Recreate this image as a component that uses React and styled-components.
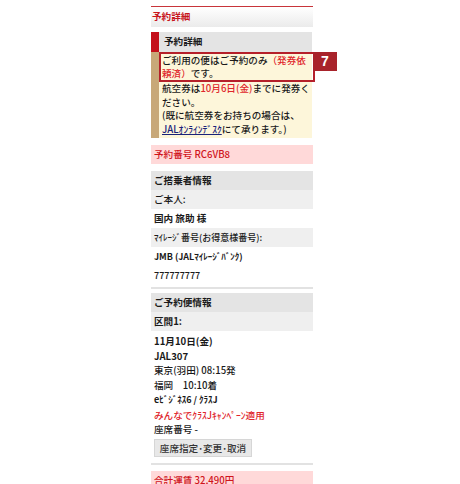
import React from "react";
import styled, { createGlobalStyle } from "styled-components";

const Global = createGlobalStyle`
  html, body { margin: 0; padding: 0; background: #fff; }
  body { font-family: "Noto Sans CJK JP", "Noto Sans", sans-serif; color: #1a1a1a; }
`;

const Page = styled.div`
  width: 460px;
  height: 484px;
  overflow: hidden;
  padding-left: 151px;
  padding-top: 6px;
  box-sizing: border-box;
`;

const Column = styled.div`
  width: 162px;
  display: flex;
  flex-direction: column;
  font-size: 9.6px;
  line-height: 13.5px;
`;

const PageTitle = styled.div`
  border-top: 1px solid #c8343a;
  height: 20px;
  display: flex;
  align-items: center;
  padding-left: 1px;
  color: #c8161d;
  font-weight: bold;
  background: linear-gradient(#ffffff, #ebebeb);
`;

const Box = styled.div`
  margin-top: 5px;
  display: grid;
  grid-template-columns: 8px 1fr;
  margin-right: 1px;
`;

const Bar = styled.div`
  background: ${(p) => p.$c};
`;

const BoxHead = styled.div`
  background: #e4e4e4;
  height: 20px;
  display: flex;
  align-items: center;
  padding-left: 5px;
  font-weight: bold;
`;

const BoxBody = styled.div`
  background: #fdf6da;
  padding: 0 0 2px 3px;
  font-weight: 500;
  white-space: nowrap;
`;

const Framed = styled.div`
  position: relative;
  margin-left: -3px;
  margin-right: -3px;
  padding: 0 0 0 1px;
  border: 2px solid #b5202a;
  line-height: 13px;
`;

const Badge = styled.div`
  position: absolute;
  left: 100%;
  top: -2px;
  width: 24px;
  height: 19px;
  background: #a8232b;
  color: #fff;
  font-weight: bold;
  font-family: "Liberation Sans", Arial, sans-serif;
  font-size: 14px;
  line-height: 19px;
  text-align: center;
`;

const Red = styled.span`
  color: #e0262c;
`;

const Link = styled.span`
  color: #1a237a;
  text-decoration: underline;
`;

const Band = styled.div`
  margin-top: ${(p) => p.$mt || 0}px;
  height: 19px;
  flex-shrink: 0;
  display: flex;
  align-items: center;
  padding-left: 3px;
  background: ${(p) => p.$bg};
  color: ${(p) => p.$color || "#1a1a1a"};
  font-weight: ${(p) => (p.$bold ? "bold" : 500)};
  font-size: ${(p) => p.$fs || 9.6}px;
`;

const Rule = styled.div`
  margin-top: ${(p) => p.$mt || 2}px;
  height: 2px;
  background: #e2e2e2;
`;

const Lines = styled.div`
  padding: 3px 0 0 3px;
  display: flex;
  flex-direction: column;
  line-height: 14.7px;
`;

const Line = styled.div`
  color: ${(p) => p.$color || "#1a1a1a"};
  font-size: ${(p) => p.$fs || 9.6}px;
  font-weight: ${(p) => (p.$bold ? "bold" : 500)};
`;

const Button = styled.button`
  margin: 2px 0 0 0;
  width: 98px;
  height: 18px;
  border: 1px solid #d6d6d6;
  background: #e8e8e8;
  font-family: inherit;
  font-size: 9.6px;
  font-weight: 500;
  color: #333;
  padding: 0;
  align-self: flex-start;
`;

export default function App() {
  return (
    <>
      <Global />
      <Page>
        <Column>
          <PageTitle>予約詳細</PageTitle>
          <Box>
            <Bar $c="#c4101b" />
            <BoxHead>予約詳細</BoxHead>
            <Bar $c="#c8a878" />
            <BoxBody>
              <Framed>
                ご利用の便はご予約のみ<Red>（発券依<br />頼済）</Red>です。
                <Badge>7</Badge>
              </Framed>
              <div>
                航空券は<Red>10月6日(金)</Red>までに発券く
              </div>
              <div>ださい。</div>
              <div>(既に航空券をお持ちの場合は、</div>
              <div>
                <Link>JALｵﾝﾗｲﾝﾃﾞｽｸ</Link>にて承ります。)
              </div>
            </BoxBody>
          </Box>
          <Band $mt={7} $bg="#ffd9d9" $color="#d0141c">予約番号 RC6VB8</Band>
          <Band $mt={7} $bg="#e4e4e4" $bold>ご搭乗者情報</Band>
          <Band $bg="#efefef">ご本人:</Band>
          <Band $bg="#fff" $bold>国内 旅助 様</Band>
          <Band $bg="#efefef" $fs={9}>ﾏｲﾚｰｼﾞ番号(お得意様番号):</Band>
          <Band $bg="#fff" $fs={9} $bold>JMB (JALﾏｲﾚｰｼﾞﾊﾞﾝｸ)</Band>
          <Band $bg="#fff" $fs={9}>777777777</Band>
          <Rule />
          <Band $mt={4} $bg="#e4e4e4" $bold>ご予約便情報</Band>
          <Band $bg="#efefef" $bold>区間1:</Band>
          <Lines>
            <Line $bold>11月10日(金)</Line>
            <Line $bold>JAL307</Line>
            <Line>東京(羽田) 08:15発</Line>
            <Line>福岡　10:10着</Line>
            <Line $fs={9} $bold>eﾋﾞｼﾞﾈｽ6 / ｸﾗｽJ</Line>
            <Line $color="#e0262c">みんなでｸﾗｽJｷｬﾝﾍﾟｰﾝ適用</Line>
            <Line>座席番号 -</Line>
            <Button>座席指定･変更･取消</Button>
          </Lines>
          <Rule $mt={6} />
          <Band $mt={6} $bg="#ffd9d9" $color="#d0141c">合計運賃 32,490円</Band>
        </Column>
      </Page>
    </>
  );
}
